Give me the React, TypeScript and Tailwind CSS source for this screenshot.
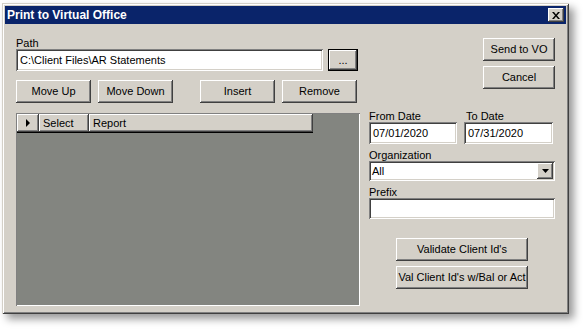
import React from "react";

const raised =
  "bg-[#d4d0c8] shadow-[inset_-1px_-1px_#404040,inset_1px_1px_#ffffff,inset_-2px_-2px_#808080,inset_2px_2px_#d4d0c8]";
const sunken =
  "bg-white shadow-[inset_1px_1px_#808080,inset_-1px_-1px_#ffffff,inset_2px_2px_#404040,inset_-2px_-2px_#d4d0c8]";

function Btn({ label, className = "" }: { label: string; className?: string }) {
  return (
    <div className={`${raised} flex h-[23px] items-center justify-center text-[11px] text-black ${className}`}>
      {label}
    </div>
  );
}

function Field({ value = "", className = "" }: { value?: string; className?: string }) {
  return (
    <div className={`${sunken} flex items-center pl-[4px] text-[11px] text-black ${className}`}>{value}</div>
  );
}

function Label({ text, className = "" }: { text: string; className?: string }) {
  return <div className={`h-[12px] text-[11px] leading-[12px] text-black ${className}`}>{text}</div>;
}

export default function App() {
  return (
    <div className="h-[329px] w-[583px] bg-white pl-[2px] pt-[3px] font-['Liberation_Sans',Arial,sans-serif]">
      <div className="flex h-[311px] w-[567px] flex-col bg-[#d4d0c8] p-[3px] shadow-[inset_1px_1px_#d4d0c8,inset_-1px_-1px_#404040,inset_2px_2px_#ffffff,inset_-2px_-2px_#808080,5px_5px_8px_rgba(0,0,0,0.4)]">
        {/* title bar */}
        <div className="flex h-[18px] shrink-0 items-center justify-between bg-[#0a246a] pl-[2px] pr-[2px]">
          <span className="text-[12px] font-bold text-white">Print to Virtual Office</span>
          <div className={`${raised} flex h-[14px] w-[16px] items-center justify-center`}>
            <svg width="8" height="7" viewBox="0 0 8 7">
              <path d="M0 0h2l2 2.5L6 0h2L5 3.5 8 7H6L4 4.5 2 7H0l3-3.5z" fill="#000" />
            </svg>
          </div>
        </div>

        {/* body */}
        <div className="flex flex-1 pl-[11px] pr-[10px]">
          {/* left column */}
          <div className="flex w-[344px] flex-col pt-[13px]">
            <Label text="Path" />
            <div className="flex gap-[5px]">
              <Field value="C:\Client Files\AR Statements" className="h-[22px] w-[307px]" />
              <div className="flex h-[22px] w-[30px] items-center justify-center bg-[#d4d0c8] text-[11px] shadow-[inset_0_0_0_1px_#000000,inset_-2px_-2px_#404040,inset_2px_2px_#ffffff,inset_-3px_-3px_#808080]">
                ...
              </div>
            </div>
            <div className="mt-[9px] flex">
              <Btn label="Move Up" className="w-[75px]" />
              <Btn label="Move Down" className="ml-[7px] w-[75px]" />
              <Btn label="Insert" className="ml-[27px] w-[75px]" />
              <Btn label="Remove" className="ml-[7px] w-[75px]" />
            </div>
            <div className="mt-[10px] h-[193px] w-[344px] bg-[#838580] pl-[1px] pt-[1px] shadow-[inset_1px_1px_#808080,inset_-1px_-1px_#ffffff]">
              <div className="flex h-[18px] w-[296px] shadow-[0_1px_#000000]">
                <div className={`${raised} flex w-[22px] items-center justify-center`}>
                  <svg width="4" height="8" viewBox="0 0 4 8">
                    <path d="M0 0L4 4L0 8z" fill="#000" />
                  </svg>
                </div>
                <div className={`${raised} flex w-[50px] items-center pl-[4px] text-[11px]`}>Select</div>
                <div className={`${raised} flex w-[224px] items-center pl-[4px] text-[11px]`}>Report</div>
              </div>
            </div>
          </div>

          {/* right column */}
          <div className="ml-[9px] flex w-[186px] flex-col pt-[14px]">
            <Btn label="Send to VO" className="w-[72px] self-end" />
            <Btn label="Cancel" className="mt-[5px] w-[72px] self-end" />
            <div className="mt-[21px] flex gap-[7px]">
              <div className="flex flex-col">
                <Label text="From Date" />
                <Field value="07/01/2020" className="h-[22px] w-[88px]" />
              </div>
              <div className="flex flex-col">
                <Label text="To Date" className="pl-[2px]" />
                <Field value="07/31/2020" className="h-[22px] w-[89px]" />
              </div>
            </div>
            <Label text="Organization" className="mt-[5px]" />
            <div className={`${sunken} flex h-[20px] items-center justify-between pl-[3px] pr-[2px] text-[11px]`}>
              <span>All</span>
              <div className={`${raised} flex h-[16px] w-[16px] items-center justify-center`}>
                <svg width="7" height="4" viewBox="0 0 7 4">
                  <path d="M0 0h7L3.5 4z" fill="#000" />
                </svg>
              </div>
            </div>
            <Label text="Prefix" className="mt-[5px]" />
            <Field className="h-[21px]" />
            <Btn label="Validate Client Id's" className="mt-[19px] w-[132px] self-center" />
            <Btn label="Val Client Id's w/Bal or Act" className="mt-[5px] w-[132px] self-center" />
          </div>
        </div>
      </div>
    </div>
  );
}
